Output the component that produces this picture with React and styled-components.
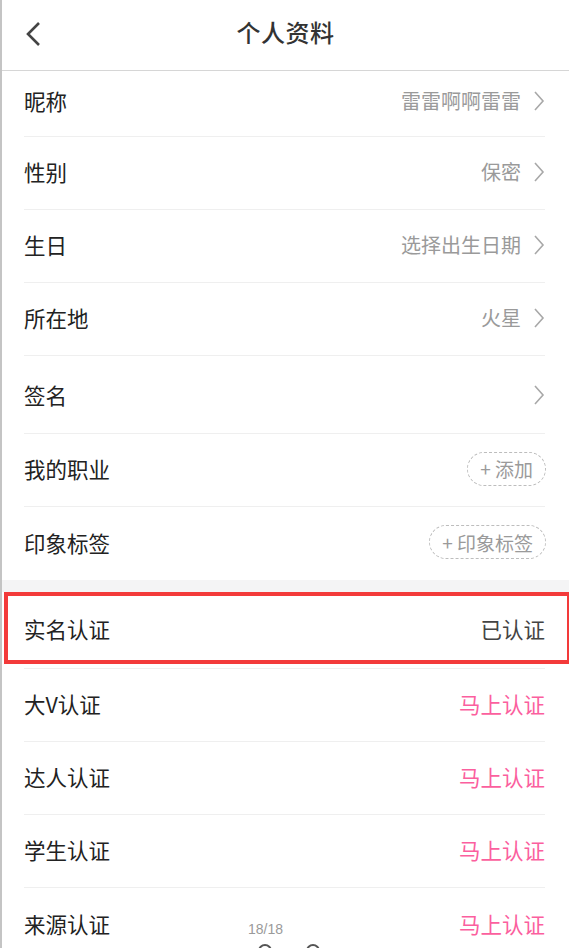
import React from "react";
import styled, { createGlobalStyle } from "styled-components";

const GlobalStyle = createGlobalStyle`
  html, body {
    margin: 0;
    padding: 0;
    background: #fff;
  }
  body {
    font-family: "Noto Sans CJK SC", "Noto Sans", "Liberation Sans", sans-serif;
  }
`;

const Page = styled.div`
  position: relative;
  width: 569px;
  height: 948px;
  overflow: hidden;
  background: #fff;
  border-left: 2px solid #c4c4c4;
  box-sizing: border-box;
`;

const Header = styled.header`
  height: 71px;
  display: flex;
  align-items: center;
  justify-content: center;
  position: relative;
  border-bottom: 1px solid #d6d6d6;
  padding-bottom: 7px;
  box-sizing: border-box;
`;

const BackButton = styled.button`
  position: absolute;
  left: 20px;
  top: 20px;
  width: 24px;
  height: 28px;
  padding: 0;
  border: none;
  background: none;
  display: flex;
  align-items: center;
  justify-content: center;
`;

const Title = styled.h1`
  margin: 0;
  font-size: 24px;
  font-weight: 500;
  color: #333;
  letter-spacing: 0.5px;
`;

const Section = styled.section`
  padding: 0 24px 0 22px;
`;

const Row = styled.div`
  position: relative;
  height: ${(p) => p.$h || 73}px;
  display: flex;
  align-items: center;
  justify-content: space-between;
  border-bottom: ${(p) => (p.$last ? "none" : "1px solid #efefef")};
  box-sizing: border-box;
  padding-bottom: ${(p) => p.$pb ?? 3}px;
`;

const Label = styled.span`
  font-size: 21.5px;
  color: #222;
`;

const Value = styled.span`
  display: flex;
  align-items: center;
  gap: 12px;
  color: ${(p) => (p.$tone === "pink" ? "#fb5f9e" : p.$tone === "dark" ? "#444" : "#9a9a9a")};
  font-size: ${(p) => (p.$tone ? 21.5 : 20)}px;
`;

const Tag = styled.span`
  display: inline-flex;
  align-items: center;
  gap: 4px;
  height: 34px;
  padding: 0 12px;
  border: 1.5px dashed #bdbdbd;
  border-radius: 17px;
  font-size: 19px;
  color: #9a9a9a;
  box-sizing: border-box;
  margin-right: -1px;
`;

const Gap = styled.div`
  height: 12px;
  background: #f4f4f5;
`;

const Highlight = styled.div`
  position: absolute;
  left: -20px;
  right: -26px;
  top: 0;
  bottom: 4px;
  border: 4px solid #f33a3a;
  pointer-events: none;
`;

const Pager = styled.div`
  position: absolute;
  left: 246px;
  top: 921px;
  font-family: "Liberation Sans", sans-serif;
  font-size: 14px;
  color: #9a9a9a;
`;

const Dot = styled.div`
  position: absolute;
  top: 944px;
  left: ${(p) => p.$x}px;
  width: 14px;
  height: 14px;
  border-radius: 50%;
  border: 2px solid #555;
  box-sizing: border-box;
`;

const Chevron = () => (
  <svg width="12" height="22" viewBox="0 0 12 22">
    <path d="M2 2 L10 11 L2 20" fill="none" stroke="#a8a8a8" strokeWidth="1.6" />
  </svg>
);

const profile = [
  { label: "昵称", value: "雷雷啊啊雷雷", h: 66, pb: 6 },
  { label: "性别", value: "保密" },
  { label: "生日", value: "选择出生日期" },
  { label: "所在地", value: "火星" },
  { label: "签名", value: "", h: 78, pb: 0 },
];

const certs = [
  { label: "大V认证" },
  { label: "达人认证" },
  { label: "学生认证" },
  { label: "来源认证" },
];

export default function App() {
  return (
    <>
      <GlobalStyle />
      <Page>
        <Header>
          <BackButton aria-label="返回">
            <svg width="18" height="26" viewBox="0 0 18 26">
              <path d="M14 2 L3 13 L14 24" fill="none" stroke="#444" strokeWidth="2.6" />
            </svg>
          </BackButton>
          <Title>个人资料</Title>
        </Header>
        <Section>
          {profile.map((item) => (
            <Row key={item.label} $h={item.h} $pb={item.pb}>
              <Label>{item.label}</Label>
              <Value>
                {item.value}
                <Chevron />
              </Value>
            </Row>
          ))}
          <Row>
            <Label>我的职业</Label>
            <Tag>+ 添加</Tag>
          </Row>
          <Row $last>
            <Label>印象标签</Label>
            <Tag>+ 印象标签</Tag>
          </Row>
        </Section>
        <Gap />
        <Section>
          <Row $h={77} $pb={4}>
            <Label>实名认证</Label>
            <Value $tone="dark">已认证</Value>
            <Highlight />
          </Row>
          {certs.map((item, i) => (
            <Row key={item.label} $last={i === certs.length - 1}>
              <Label>{item.label}</Label>
              <Value $tone="pink">马上认证</Value>
            </Row>
          ))}
        </Section>
        <Pager>18/18</Pager>
        <Dot $x={256} />
        <Dot $x={304} />
      </Page>
    </>
  );
}
